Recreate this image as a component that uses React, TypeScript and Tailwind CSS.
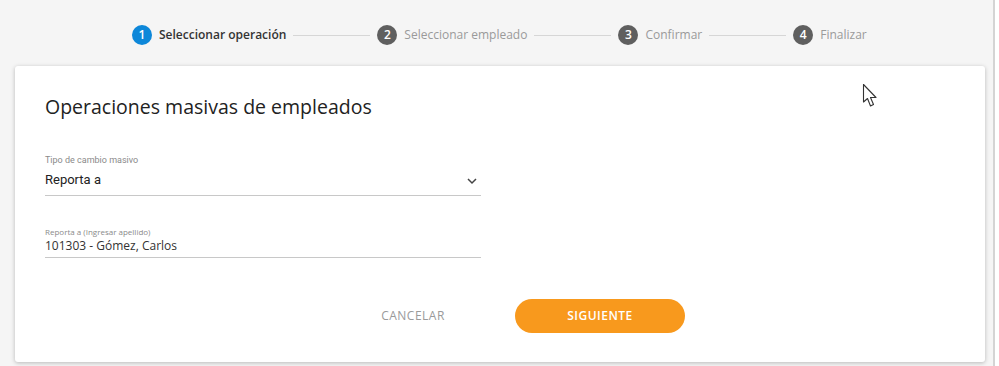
import React from "react";

const steps = [
  { n: 1, label: "Seleccionar operación", active: true },
  { n: 2, label: "Seleccionar empleado", active: false },
  { n: 3, label: "Confirmar", active: false },
  { n: 4, label: "Finalizar", active: false },
];

export default function App() {
  return (
    <div className="w-[999px] h-[366px] flex bg-white overflow-hidden" style={{ fontFamily: '"Open Sans", sans-serif' }}>
      <div className="w-[993px] h-full bg-[#f5f5f5] flex flex-col">
        <div className="h-[66px] flex items-center pl-[132px] pt-[4px]">
          {steps.map((s, i) => (
            <React.Fragment key={s.n}>
              <div className="flex items-center">
                <div
                  className={`w-[20px] h-[20px] rounded-full flex items-center justify-center text-white text-[12px] font-semibold ${s.active ? "bg-[#0d87d9]" : "bg-[#5f5f5f]"}`}
                >
                  {s.n}
                </div>
                <span className={`ml-[7px] text-[12px] ${s.active ? "text-[#333] font-semibold" : "text-[#9a9a9a]"}`}>{s.label}</span>
              </div>
              {i < steps.length - 1 && <div className="w-[77px] h-px bg-[#d6d6d6] mx-[7px]" />}
            </React.Fragment>
          ))}
        </div>
        <div className="relative ml-[15px] w-[970px] h-[296px] bg-white rounded-[3px] shadow-[0_1px_4px_rgba(0,0,0,0.25)] px-[30px] pt-[27px]">
          <h1 className="text-[19.5px] text-[#222] leading-[28px]">Operaciones masivas de empleados</h1>
          <div className="mt-[33px] w-[436px]">
            <div className="text-[9px] text-[#8a8a8a] leading-[12px]" style={{ fontFamily: "Roboto, sans-serif" }}>Tipo de cambio masivo</div>
            <div className="flex items-center justify-between pt-[5px] pb-[6px] border-b border-[#c8c8c8]" style={{ fontFamily: "Roboto, sans-serif" }}>
              <span className="text-[13px] leading-[18px] text-[#222]">Reporta a</span>
              <svg width="12" height="8" viewBox="0 0 12 8" className="mr-[3px] mt-[2px]">
                <path d="M2 2 L6 6 L10 2" fill="none" stroke="#444" strokeWidth="1.5" />
              </svg>
            </div>
          </div>
          <div className="mt-[30px] w-[436px]">
            <div className="text-[8px] text-[#8a8a8a] leading-[11px]">Reporta a (Ingresar apellido)</div>
            <div className="flex items-center pb-[2px] border-b border-[#c8c8c8]">
              <span className="text-[12px] leading-[18px] text-[#333]">101303 - Gómez, Carlos</span>
            </div>
          </div>
          <div className="mt-[41px] flex items-center pl-[334px]">
            <button className="w-[68px] text-[12px] tracking-[0.5px] text-[#9a9a9a]">CANCELAR</button>
            <button className="ml-[68px] w-[170px] h-[34px] rounded-full bg-[#f8991d] text-white text-[12px] font-semibold tracking-[0.5px]">SIGUIENTE</button>
          </div>
          <svg className="absolute left-[847px] top-[17px]" width="20" height="26" viewBox="0 0 20 26">
            <path d="M1.5 1.5 L1.5 19 L5.5 15.5 L8.5 23 L11.5 21.5 L8.5 14.5 L14 14.5 Z" fill="white" stroke="#333" strokeWidth="1.1" strokeLinejoin="round" />
          </svg>
        </div>
      </div>
      <div className="w-[2px] h-full bg-[#d4d4d4]" />
    </div>
  );
}
